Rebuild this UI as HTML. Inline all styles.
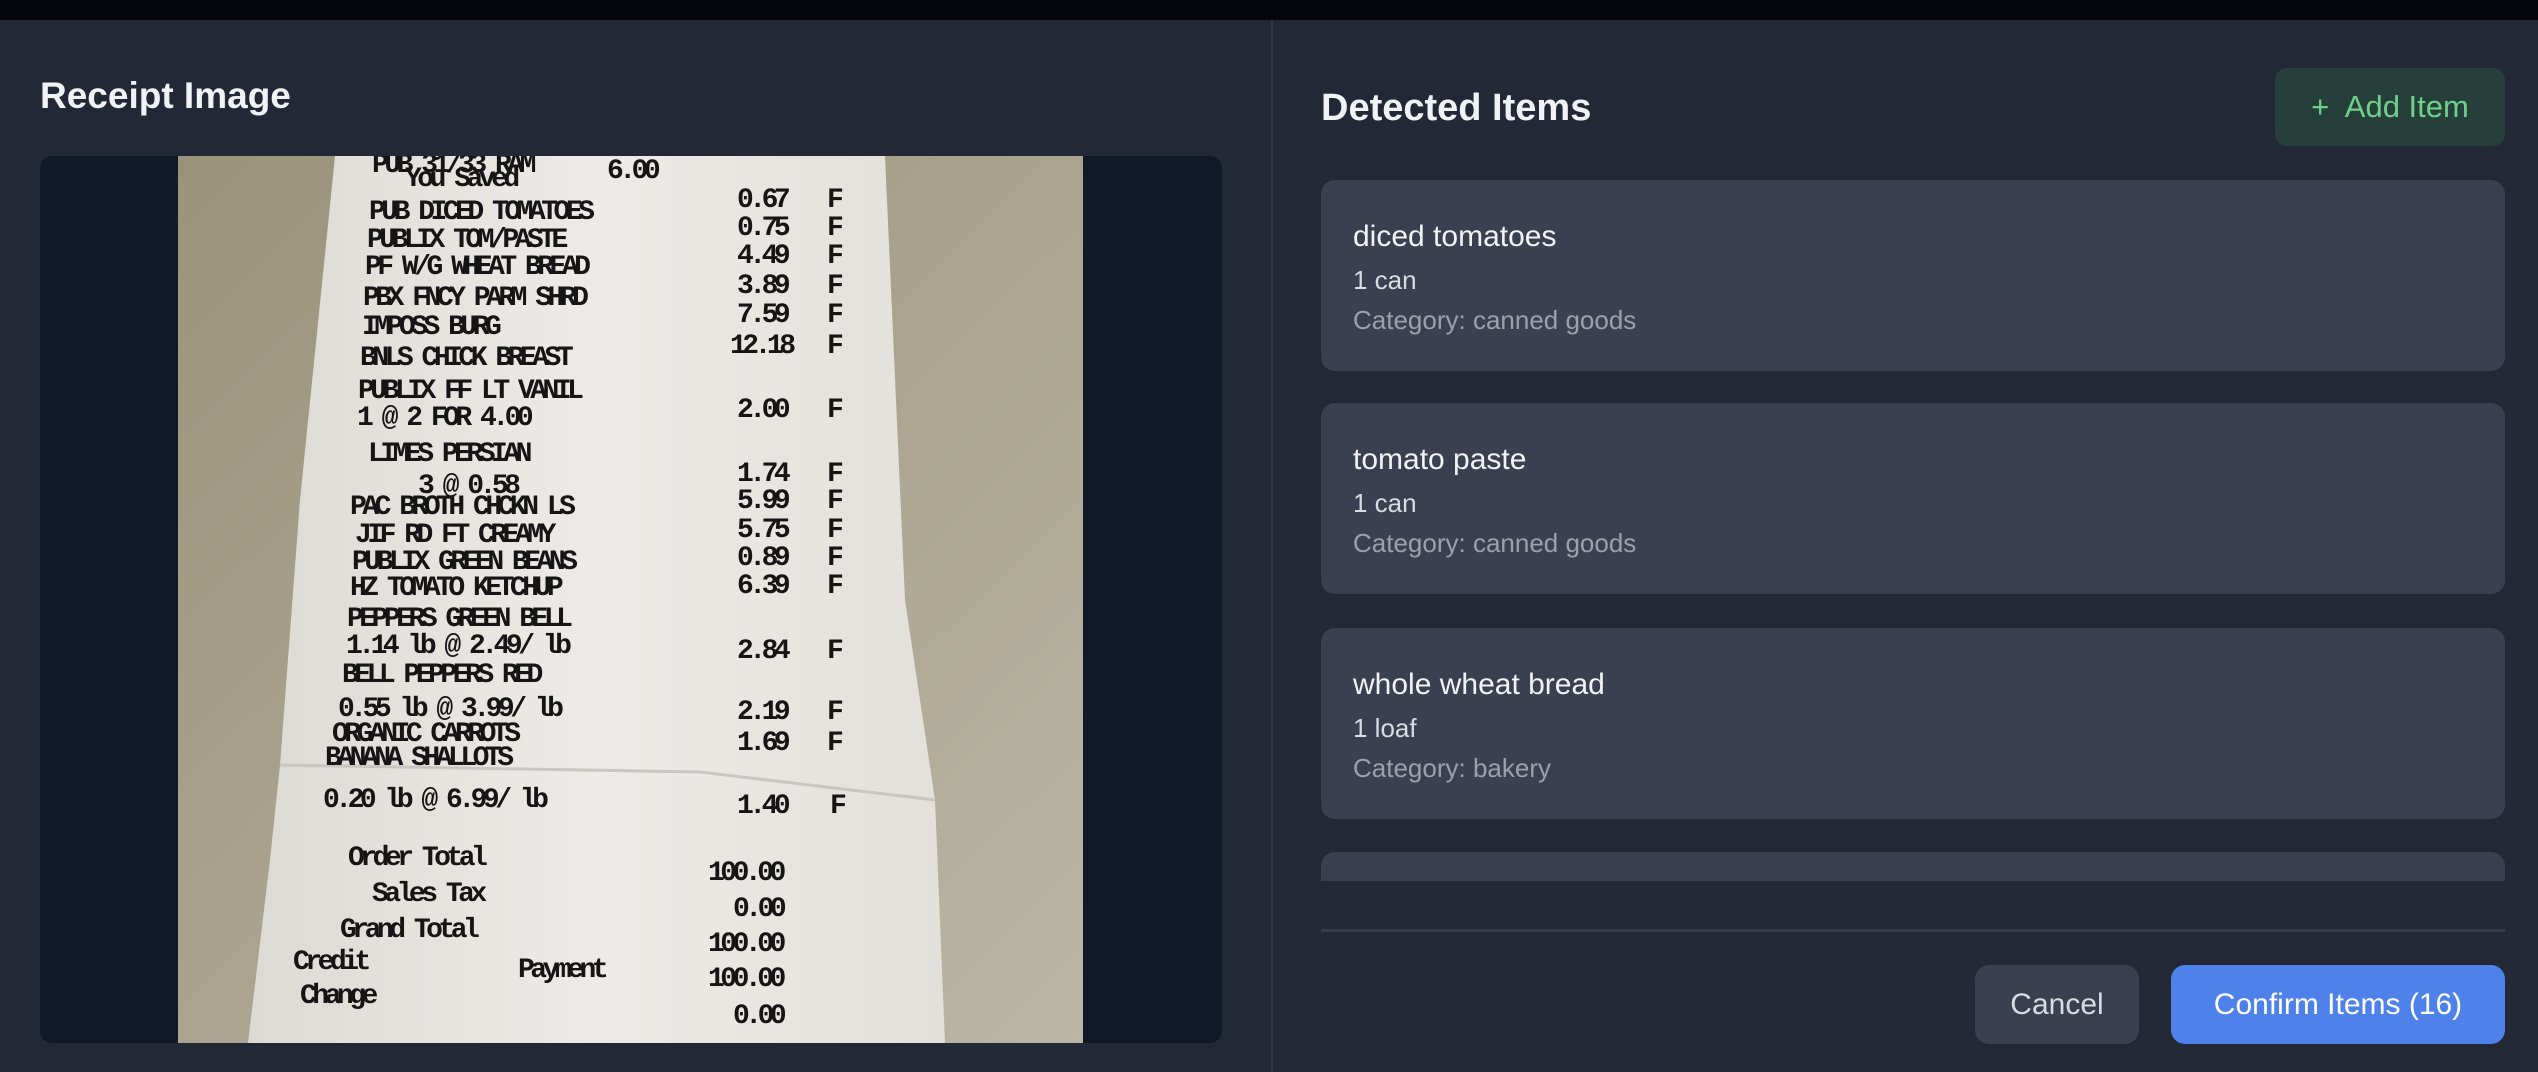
<!DOCTYPE html>
<html><head><meta charset="utf-8"><style>
*{margin:0;padding:0;box-sizing:border-box}
body{width:2538px;height:1072px;background:#222836;font-family:"Liberation Sans",sans-serif;position:relative;overflow:hidden}
.top{position:absolute;left:0;top:0;width:2538px;height:20px;background:#05060b}
.divider{position:absolute;left:1271px;top:20px;width:2px;height:1052px;background:#2f3646}
h2{position:absolute;font-weight:600;color:#f1f2f4}
.imgbox{position:absolute;left:40px;top:156px;width:1182px;height:887px;background:#111827;border-radius:12px;overflow:hidden}
.add{position:absolute;left:2275px;top:68px;width:230px;height:78px;background:#273f3a;border-radius:12px;color:#6fd08a;font-size:31px;line-height:78px;text-align:center}
.card{position:absolute;left:1321px;width:1184px;height:191px;background:#3a4050;border-radius:14px}
.card .n{position:absolute;left:32px;top:40px;font-size:30px;color:#f1f2f4}
.card .q{position:absolute;left:32px;top:85px;font-size:26px;color:#d8dbe0}
.card .c{position:absolute;left:32px;top:125px;font-size:26px;color:#9ba1ac}
.hr{position:absolute;left:1321px;top:929px;width:1184px;height:3px;background:#363c4a}
.btn{position:absolute;top:965px;height:79px;border-radius:14px;font-size:30px;line-height:79px;text-align:center}
</style></head><body>
<div class="top"></div>
<div class="divider"></div>
<h2 style="left:40px;top:75px;font-size:37px">Receipt Image</h2>
<div class="imgbox">
<svg width="1182" height="887" viewBox="40 156 1182 887" style="position:absolute;left:0;top:0">
<defs>
<linearGradient id="bg" x1="0" y1="0" x2="1" y2="1"><stop offset="0" stop-color="#9a937b"/><stop offset="0.5" stop-color="#aaa48f"/><stop offset="1" stop-color="#bbb6a5"/></linearGradient>
<linearGradient id="pp" x1="0" y1="0" x2="1" y2="0"><stop offset="0" stop-color="#dcdad4"/><stop offset="0.5" stop-color="#ecebe7"/><stop offset="1" stop-color="#e2e0da"/></linearGradient>
</defs>
<rect x="178" y="156" width="905" height="887" fill="url(#bg)"/>
<path d="M335 156 L885 156 L905 600 L935 800 L945 1043 L248 1043 L270 860 L280 765 L300 500 Z" fill="url(#pp)"/>
<path d="M280 765 L700 772 L935 800" stroke="#c8c6c0" stroke-width="3" fill="none"/>
<g font-family="Liberation Mono,monospace" font-size="28" font-weight="bold" fill="#151515" letter-spacing="-4.5">
<text x="372" y="172">PUB 31/33 RAM</text>
<text x="405" y="186">You Saved</text><text x="607" y="178">6.00</text>
<text x="369" y="219">PUB DICED TOMATOES</text><text x="737" y="207">0.67</text><text x="827" y="207">F</text>
<text x="367" y="247">PUBLIX TOM/PASTE</text><text x="737" y="235">0.75</text><text x="827" y="235">F</text>
<text x="365" y="274">PF W/G WHEAT BREAD</text><text x="737" y="263">4.49</text><text x="827" y="263">F</text>
<text x="363" y="305">PBX FNCY PARM SHRD</text><text x="737" y="293">3.89</text><text x="827" y="293">F</text>
<text x="362" y="334">IMPOSS BURG</text><text x="737" y="322">7.59</text><text x="827" y="322">F</text>
<text x="360" y="365">BNLS CHICK BREAST</text><text x="730" y="353">12.18</text><text x="827" y="353">F</text>
<text x="358" y="398">PUBLIX FF LT VANIL</text>
<text x="357" y="425">1 @  2 FOR    4.00</text><text x="737" y="417">2.00</text><text x="827" y="417">F</text>
<text x="368" y="461">LIMES PERSIAN</text>
<text x="418" y="493">3 @    0.58</text><text x="737" y="481">1.74</text><text x="827" y="481">F</text>
<text x="350" y="514">PAC BROTH CHCKN LS</text><text x="737" y="508">5.99</text><text x="827" y="508">F</text>
<text x="355" y="542">JIF RD FT CREAMY</text><text x="737" y="537">5.75</text><text x="827" y="537">F</text>
<text x="352" y="569">PUBLIX GREEN BEANS</text><text x="737" y="565">0.89</text><text x="827" y="565">F</text>
<text x="350" y="595">HZ TOMATO KETCHUP</text><text x="737" y="593">6.39</text><text x="827" y="593">F</text>
<text x="347" y="626">PEPPERS GREEN BELL</text>
<text x="346" y="653">1.14 lb @     2.49/ lb</text><text x="737" y="658">2.84</text><text x="827" y="658">F</text>
<text x="342" y="682">BELL PEPPERS RED</text>
<text x="338" y="716">0.55 lb @    3.99/ lb</text><text x="737" y="719">2.19</text><text x="827" y="719">F</text>
<text x="332" y="741">ORGANIC CARROTS</text><text x="737" y="750">1.69</text><text x="827" y="750">F</text>
<text x="325" y="765">BANANA SHALLOTS</text>
<text x="323" y="807">0.20 lb @     6.99/ lb</text><text x="737" y="813">1.40</text><text x="830" y="813">F</text>
<text x="348" y="865">Order Total</text><text x="708" y="880">100.00</text>
<text x="372" y="901">Sales Tax</text><text x="733" y="916">0.00</text>
<text x="340" y="937">Grand Total</text><text x="708" y="951">100.00</text>
<text x="293" y="969">Credit</text><text x="518" y="977">Payment</text><text x="708" y="986">100.00</text>
<text x="300" y="1003">Change</text><text x="733" y="1023">0.00</text>
</g>
</svg>
</div>
<h2 style="left:1321px;top:87px;font-size:38px">Detected Items</h2>
<div class="add">+&nbsp; Add Item</div>
<div class="card" style="top:180px"><div class="n">diced tomatoes</div><div class="q">1 can</div><div class="c">Category: canned goods</div></div>
<div class="card" style="top:403px"><div class="n">tomato paste</div><div class="q">1 can</div><div class="c">Category: canned goods</div></div>
<div class="card" style="top:628px"><div class="n">whole wheat bread</div><div class="q">1 loaf</div><div class="c">Category: bakery</div></div>
<div class="card" style="top:852px;height:29px;border-radius:14px 14px 0 0"></div>
<div class="hr"></div>
<div class="btn" style="left:1975px;width:164px;background:#3a4050;color:#d8dbe0">Cancel</div>
<div class="btn" style="left:2171px;width:334px;background:#4f81ea;color:#fff">Confirm Items (16)</div>
</body></html>
